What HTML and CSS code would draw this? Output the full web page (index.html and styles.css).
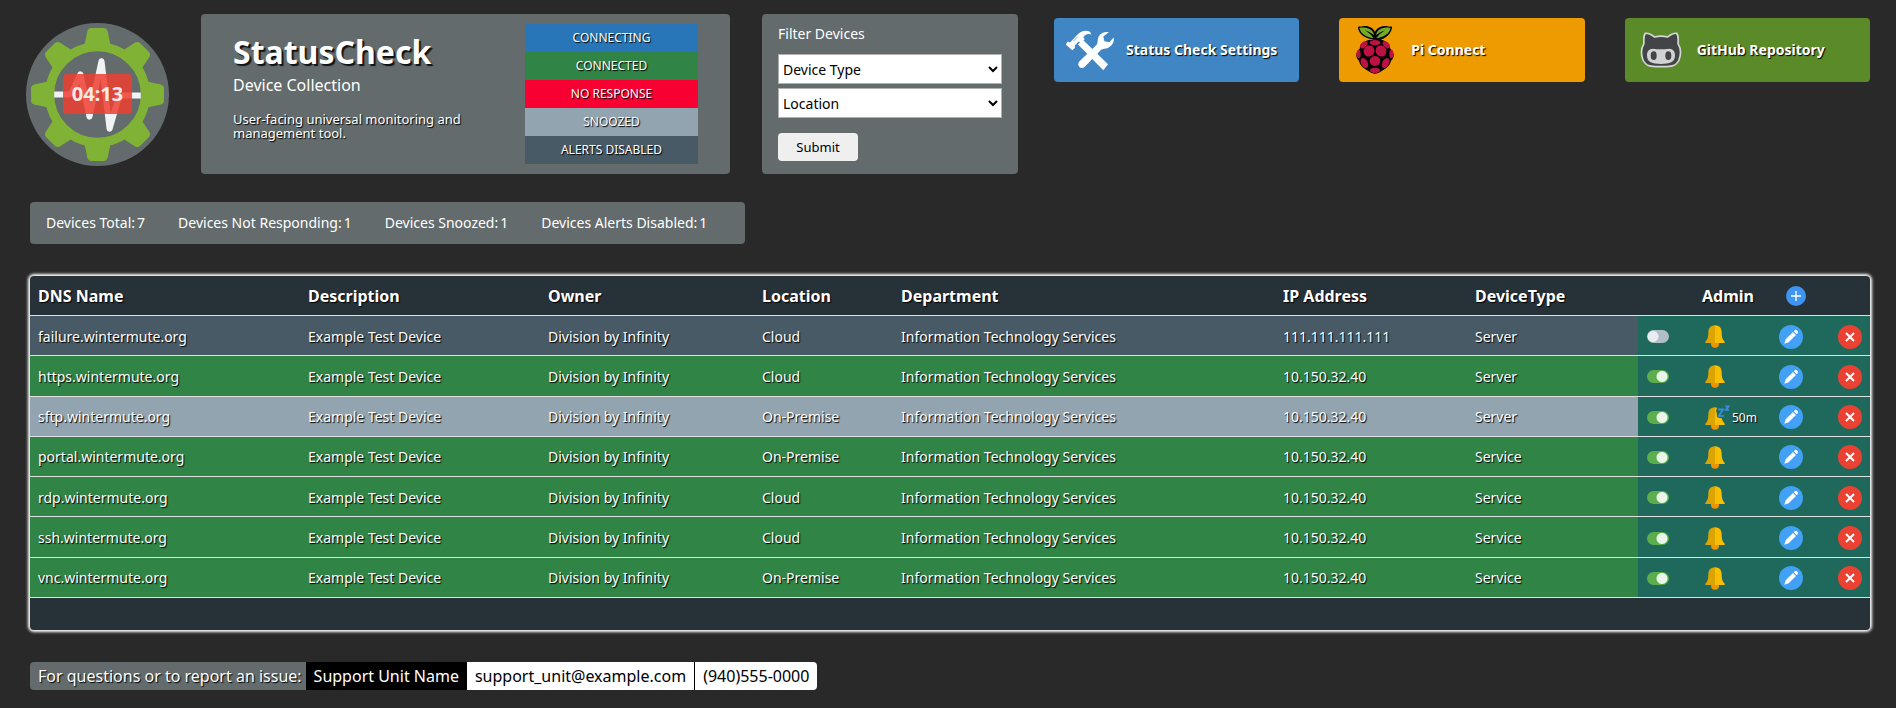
FILE: index.html
```html
<!DOCTYPE html>
<html lang="en">
<head>
<meta charset="utf-8">
<title>StatusCheck</title>
<link rel="stylesheet" href="styles.css">
</head>
<body>
<svg class="sprite" aria-hidden="true">
  <symbol id="tools" viewBox="0 0 144 122">
    <g fill="#fff">
      <path d="M0 42 L5 34 L12 37 L34 14 C45 2 60-2 72 5 L76 13 C66 9 58 13 52 21 L56 27 L45 38 L38 34 L26 47 L27 53 L19 60 L0 44Z"/>
      <path d="M49 27 L126 102 L112 120 L36 43Z"/>
      <path d="M128 6 C113 4 101 11 97 22 C94 31 96 37 92 44 L40 94 C31 104 42 119 55 111 L104 60 C111 53 119 58 129 51 C142 43 145 33 143 22 L130 36 L115 33 L112 19Z"/>
    </g>
    <path d="M17 28 L27 18 M22 33 L34 21" stroke="#4186c4" stroke-width="2"/>
  </symbol>
  <symbol id="pi" viewBox="0 0 114 144">
    <path d="M57 41 C34 39 10 30 6 6 C5 2 9 0 14 2 C25-2 48-1 57 17 C66-1 89-2 100 2 C106 0 109 2 108 6 C104 30 80 39 75 41 C92 44 102 56 103 68 C116 78 116 97 105 104 C101 123 86 129 77 135 Q57 152 37 135 C28 129 13 123 9 104 C-2 97-2 78 11 68 C12 56 24 44 42 41Z"/>
    <path d="M53 36 C31 34 15 25 10 6 C27 2 50 6 54 27 Q42 18 27 13 Q42 22 53 36Z M61 36 C83 34 99 25 104 6 C87 2 64 6 60 27 Q72 18 87 13 Q72 22 61 36Z" fill="#75a928"/>
    <g fill="#bc1142">
      <ellipse cx="57" cy="50" rx="16" ry="8"/><ellipse cx="39" cy="75" rx="16" ry="17" transform="rotate(35 39 75)"/><ellipse cx="75" cy="75" rx="16" ry="17" transform="rotate(-35 75 75)"/>
      <ellipse cx="57" cy="105" rx="16" ry="15"/><ellipse cx="23" cy="56" rx="8" ry="13" transform="rotate(45 23 56)"/><ellipse cx="91" cy="56" rx="8" ry="13" transform="rotate(-45 91 56)"/>
      <ellipse cx="8" cy="84" rx="6" ry="13"/><ellipse cx="106" cy="84" rx="6" ry="13"/>
      <ellipse cx="25" cy="111" rx="10" ry="16" transform="rotate(-28 25 111)"/><ellipse cx="89" cy="111" rx="10" ry="16" transform="rotate(28 89 111)"/><ellipse cx="57" cy="133" rx="15" ry="8"/>
    </g>
  </symbol>
  <symbol id="cat" viewBox="0 0 124 108">
    <path d="M15 4 C27 2 37 11 43 15 Q62 10 81 15 C87 11 97 2 109 4 C115 11 114 25 113 35 C122 49 122 68 116 84 C106 106 85 104 62 104 C39 104 18 106 8 84 C2 68 2 49 11 35 C10 25 9 11 15 4Z" fill="#434448" stroke="#d5d6d6" stroke-width="5"/>
    <path d="M38 50 Q62 54 86 50 C99 50 104 59 104 70 C104 92 87 96 62 96 C37 96 20 92 20 70 C20 59 25 50 38 50Z" fill="#d2d2d2"/>
    <ellipse cx="40" cy="71" rx="9" ry="13" fill="#434448"/><ellipse cx="84" cy="71" rx="9" ry="13" fill="#434448"/>
  </symbol>
  <symbol id="bell" viewBox="0 0 60 69">
    <circle cx="30" cy="56" r="12" fill="#f09300"/>
    <path d="M30 1 C15 1 10 12 10 22 C10 36 8 44 1 50 V54 H30Z" fill="#dba400"/>
    <path d="M30 1 C45 1 50 12 50 22 C50 36 52 44 59 50 V54 H30Z" fill="#fabe00"/>
  </symbol>
  <symbol id="snooze" viewBox="0 0 75 75">
    <circle cx="30" cy="62" r="12" fill="#f09300"/>
    <path d="M30 7 C15 7 10 18 10 28 C10 42 8 50 1 56 V60 H30Z" fill="#dba400"/>
    <path d="M30 7 Q34 7 36 9 L33 18 Q37 23 36 36 Q39 39 50 40 Q53 51 59 56 V60 H30Z" fill="#fabe00"/>
    <path d="M39 13 H54 L41 33 H57 M61 4 H71 L62 15 H73" fill="none" stroke="#3b8ee2" stroke-width="5"/>
  </symbol>
  <symbol id="edit" viewBox="0 0 72 72">
    <circle cx="36" cy="36" r="36" fill="#42a0f5"/>
    <path d="M16 56 L20 43 L42 21 L51 30 L29 52Z M44 19 L48 15 Q51 13 55 17 Q59 21 56 25 L53 28Z" fill="#fff"/>
  </symbol>
  <symbol id="remove" viewBox="0 0 72 72">
    <circle cx="36" cy="36" r="36" fill="#eb4132"/>
    <path d="M24 24 L48 48 M48 24 L24 48" stroke="#fff" stroke-width="6"/>
  </symbol>
  <symbol id="add" viewBox="0 0 60 60">
    <circle cx="30" cy="30" r="30" fill="#3d94f2"/>
    <path d="M30 15 V45 M15 30 H45" stroke="#fff" stroke-width="4"/>
  </symbol>
</svg>

<header class="top">
  <div class="logo">
    <svg class="logo-art" viewBox="-71 -71 142 142" aria-hidden="true">
      <circle r="71" fill="#636b6c"/>
      <circle r="47.500" fill="none" stroke="#80b335" stroke-width="9"/>
      <g fill="#80b335">
        <path id="tooth" d="M-13-49 L-10-63 Q-9-66-6-66 H6 Q9-66 10-63 L13-49 L18-46 H-18Z"/>
        <use href="#tooth" transform="rotate(45)"/><use href="#tooth" transform="rotate(90)"/><use href="#tooth" transform="rotate(135)"/><use href="#tooth" transform="rotate(180)"/><use href="#tooth" transform="rotate(225)"/><use href="#tooth" transform="rotate(270)"/><use href="#tooth" transform="rotate(315)"/>
      </g>
      <path d="M-43 0 H-29 Q-26 0-25-3 L-17-20 L-8 22 L4-33 L12 34 L21 3 Q22 1 25 1 H43" fill="none" stroke="#f1f2f6" stroke-width="6" stroke-linejoin="round"/>
    </svg>
    <span class="timer">04:13</span>
  </div>

  <section class="panel intro">
    <div class="intro-text">
      <h1>StatusCheck</h1>
      <p class="subtitle">Device Collection</p>
      <p class="summary">User-facing universal monitoring and management tool.</p>
    </div>
    <ul class="legend">
      <li class="connecting">CONNECTING</li>
      <li class="connected">CONNECTED</li>
      <li class="failed">NO RESPONSE</li>
      <li class="snoozed">SNOOZED</li>
      <li class="disabled">ALERTS DISABLED</li>
    </ul>
  </section>

  <form class="panel filter">
    <h2>Filter Devices</h2>
    <select aria-label="Device Type"><option>Device Type</option></select>
    <select aria-label="Location"><option>Location</option></select>
    <button class="submit" type="button">Submit</button>
  </form>

  <nav class="links">
    <a class="link settings" href="#settings"><svg><use href="#tools"/></svg>Status Check Settings</a>
    <a class="link connect" href="#connect"><svg><use href="#pi"/></svg>Pi Connect</a>
    <a class="link repo" href="#repo"><svg><use href="#cat"/></svg>GitHub Repository</a>
  </nav>
</header>

<main>
  <div class="panel stats">
    <span class="stat">Devices Total:<span>7</span></span>
    <span class="stat">Devices Not Responding:<span>1</span></span>
    <span class="stat">Devices Snoozed:<span>1</span></span>
    <span class="stat">Devices Alerts Disabled:<span>1</span></span>
  </div>

  <div class="devices">
    <table>
      <colgroup><col class="c-dns"><col class="c-desc"><col class="c-owner"><col class="c-loc"><col class="c-dept"><col class="c-ip"><col class="c-type"><col class="c-toggle"><col class="c-bell"><col class="c-edit"><col class="c-remove"></colgroup>
      <thead>
        <tr><th>DNS Name</th><th>Description</th><th>Owner</th><th>Location</th><th>Department</th><th>IP Address</th><th>DeviceType</th><th></th><th class="admin-head">Admin</th><th class="add-head"><button class="icon" aria-label="Add device"><svg class="i-add"><use href="#add"/></svg></button></th><th></th></tr>
      </thead>
      <tbody id="rows"></tbody>
    </table>
  </div>

  <footer class="support">
    <span class="ask">For questions or to report an issue:</span>
    <span class="unit">Support Unit Name</span>
    <a class="mail" href="mailto:support_unit@example.com">support_unit@example.com</a>
    <a class="phone" href="tel:9405550000">(940)555-0000</a>
  </footer>
</main>
<script src="devices.js"></script>
</body>
</html>
```
FILE: styles.css
```css
* { box-sizing: border-box; }
body {
  margin: 0;
  background: #292929;
  color: #fff;
  font: 14px/20px "Noto Sans", "Open Sans", sans-serif;
}
h1, h2, p, ul { margin: 0; padding: 0; }
button, select { font-family: inherit; }
.sprite { display: none; }
.panel { background: #636b6c; border-radius: 4px; }

.top {
  display: grid;
  grid-template-columns: 143px minmax(0, 529fr) minmax(0, 256fr) minmax(0, 820fr);
  gap: 32px;
  padding: 14px 26px 0;
}
.logo { display: grid; place-items: center; align-self: center; }
.logo-art { grid-area: 1 / 1; width: 143px; height: 143px; }
.timer {
  grid-area: 1 / 1;
  z-index: 1;
  padding: 6px 9px;
  border-radius: 4px;
  background: rgba(238, 62, 48, .85);
  color: rgba(255, 255, 255, .9);
  font-size: 20px;
  font-weight: 700;
  line-height: 28px;
}

.intro { display: flex; justify-content: space-between; padding: 10px 32px; }
.intro-text { padding-top: 6px; max-width: 250px; }
h1 { font-size: 32px; line-height: 44px; text-shadow: 2px 2px 1px #111; }
.subtitle { font-size: 16px; line-height: 22px; }
.summary { margin-top: 16px; font-size: 13px; line-height: 14px; text-shadow: 1px 1px 1px #000; }
.legend { width: 173px; list-style: none; text-align: center; font-size: 12px; line-height: 28px; text-shadow: 1px 1px 1px #000; }
.connecting { background: #2876b8; }
.connected { background: #308446; }
.failed { background: #f80032; }
.snoozed { background: #92a4b0; }
.disabled { background: #485a66; }

.filter { display: flex; flex-direction: column; padding: 10px 16px; }
h2 { margin-bottom: 10px; font-size: 14px; font-weight: 400; line-height: 20px; }
select { height: 30px; margin-bottom: 4px; border: 1px solid #b0b0b0; border-radius: 0; background: #fff; color: #000; font-size: 14px; }
.submit { align-self: flex-start; width: 80px; height: 28px; margin-top: 11px; border: 0; border-radius: 4px; background: #efefef; color: #000; font-size: 13px; }

.links { display: grid; grid-template-columns: repeat(3, minmax(0, 1fr)); gap: 40px; align-items: start; padding: 4px 0 0 4px; }
.link { display: flex; align-items: center; gap: 12px; height: 64px; padding: 0 12px; border-radius: 4px; color: #fff; font-weight: 700; text-decoration: none; text-shadow: 1px 1px 1px #000; }
.link svg { flex: none; width: 48px; height: 48px; }
.settings { background: #4186c4; }
.settings svg { height: 41px; }
.connect { background: #ed9b00; }
.repo { background: #5b8b29; }
.repo svg { height: 36px; }

main { padding: 28px 26px 19px 30px; }
.stats { display: flex; width: fit-content; padding: 11px 5px 11px 16px; }
.stat { display: flex; gap: 2px; margin-right: 33px; }

.devices {
  margin-top: 32px;
  padding-bottom: 32px;
  border-radius: 4px;
  overflow: hidden;
  background: #263138;
  box-shadow: 0 0 3px 2px #fff;
}
table { width: 100%; height: 322px; table-layout: fixed; border-collapse: separate; border-spacing: 0; text-shadow: 1px 1px 1px #000; }
th, td { height: 40px; padding: 0 8px; border-bottom: 1px solid #e0e0e0; text-align: left; white-space: nowrap; }
td { padding-top: 2px; }
th { font-size: 16px; }
tbody .admin { background: #1f695c; }
.admin { font-size: 12px; }
.admin-head { padding-left: 5px; }
.add-head { padding-left: 15px; }
.c-dns { width: 270px; }
.c-desc { width: 240px; }
.c-owner { width: 214px; }
.c-loc { width: 139px; }
.c-dept { width: 382px; }
.c-ip { width: 192px; }
.c-type { width: 171px; }
.c-toggle { width: 59px; }
.c-bell { width: 74px; }
.c-edit { width: 59px; }
.c-remove { width: 40px; }

.icon { display: inline-flex; align-items: center; gap: 2px; padding: 0; border: 0; background: none; color: #fff; font-size: 12px; text-shadow: inherit; vertical-align: middle; }
.i-bell { width: 20px; height: 23px; }
.i-snooze { width: 25px; height: 25px; }
.i-round { width: 24px; height: 24px; }
.i-add { width: 20px; height: 20px; }
.toggle { appearance: none; display: block; width: 22px; height: 13px; margin: 0 0 0 1px; border-radius: 7px; background: radial-gradient(circle at 6px 50%, #e9edf1 5px, #b0bec5 6px); }
.toggle:checked { background: radial-gradient(circle at 15px 50%, #e8f5e8 5px, #5bae4b 6px); }

.support { display: flex; width: fit-content; margin-top: 32px; border-radius: 4px; overflow: hidden; font-size: 16px; line-height: 28px; }
.support > * { padding: 0 8px; }
.support .ask { padding-right: 4px; background: #636b6c; text-shadow: 1px 1px 1px #000; }
.unit { background: #000; }
.mail, .phone { background: #fff; color: #000; text-decoration: none; }
.phone { border-left: 1px solid #000; }
```
FILE: devices.js
```js
const devices = [
  ["failure", "Cloud", "111.111.111.111", "Server", "disabled"],
  ["https", "Cloud", "10.150.32.40", "Server", "connected"],
  ["sftp", "On-Premise", "10.150.32.40", "Server", "snoozed"],
  ["portal", "On-Premise", "10.150.32.40", "Service", "connected"],
  ["rdp", "Cloud", "10.150.32.40", "Service", "connected"],
  ["ssh", "Cloud", "10.150.32.40", "Service", "connected"],
  ["vnc", "On-Premise", "10.150.32.40", "Service", "connected"]
];

document.getElementById("rows").innerHTML = devices.map(([name, place, ip, type, state]) => {
  const host = name + ".wintermute.org";
  const bell = state === "snoozed"
    ? '<svg class="i-snooze"><use href="#snooze"/></svg>50m'
    : '<svg class="i-bell"><use href="#bell"/></svg>';
  return `<tr class="${state}">
    <td>${host}</td><td>Example Test Device</td><td>Division by Infinity</td><td>${place}</td>
    <td>Information Technology Services</td><td>${ip}</td><td>${type}</td>
    <td class="admin"><input class="toggle" type="checkbox" aria-label="Alerts for ${host}" ${state === "disabled" ? "" : "checked"}></td>
    <td class="admin"><button class="icon" aria-label="Snooze ${host}">${bell}</button></td>
    <td class="admin"><button class="icon" aria-label="Edit ${host}"><svg class="i-round"><use href="#edit"/></svg></button></td>
    <td class="admin"><button class="icon" aria-label="Delete ${host}"><svg class="i-round"><use href="#remove"/></svg></button></td>
  </tr>`;
}).join("");
```
